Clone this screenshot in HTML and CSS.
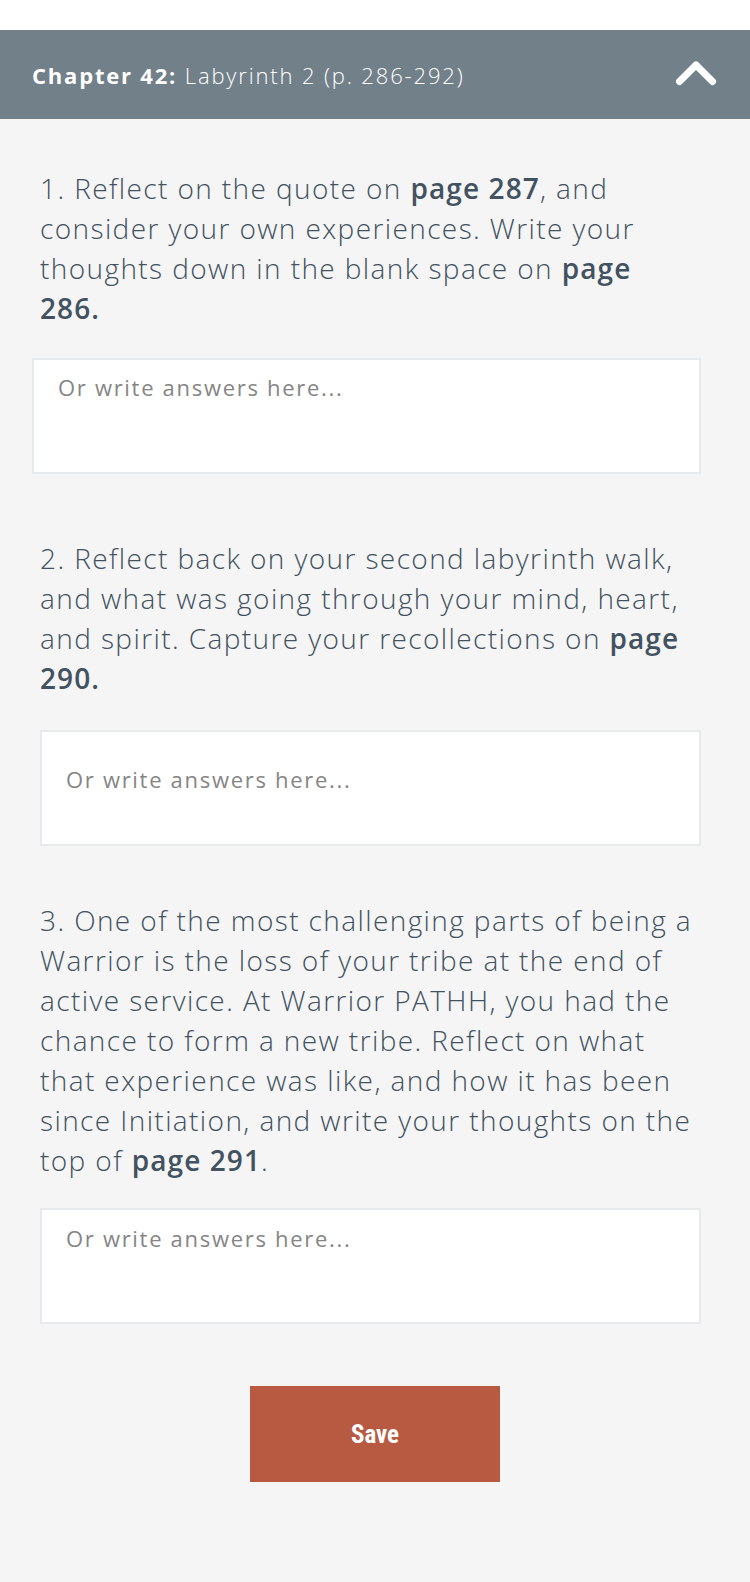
FILE: index.html
```html
<!DOCTYPE html>
<html lang="en">
<head>
<meta charset="utf-8">
<title>Chapter 42: Labyrinth 2</title>
<link rel="stylesheet" href="styles.css">
</head>
<body>
<div class="topbar"></div>
<header class="chapter-head">
  <h1 class="chapter-title"><strong>Chapter 42:</strong> Labyrinth 2 (p. 286-292)</h1>
  <button class="toggle" aria-label="Collapse">
    <svg width="42" height="26" viewBox="0 0 42 26"><path d="M4.5 21.5 L21 5 L37.5 21.5" fill="none" stroke="#fff" stroke-width="7" stroke-linecap="round" stroke-linejoin="round"/></svg>
  </button>
</header>
<main class="content">
  <section class="question q1">
    <p class="prompt">1. Reflect on the quote on <b>page 287</b>, and<br>consider your own experiences. Write your<br>thoughts down in the blank space on <b>page<br>286.</b></p>
    <textarea class="answer answer-wide" placeholder="Or write answers here..."></textarea>
  </section>
  <section class="question q2">
    <p class="prompt">2. Reflect back on your second labyrinth walk,<br>and what was going through your mind, heart,<br>and spirit. Capture your recollections on <b>page<br>290.</b></p>
    <textarea class="answer answer-low" placeholder="Or write answers here..."></textarea>
  </section>
  <section class="question q3">
    <p class="prompt">3. One of the most challenging parts of being a<br>Warrior is the loss of your tribe at the end of<br>active service. At Warrior PATHH, you had the<br>chance to form a new tribe. Reflect on what<br>that experience was like, and how it has been<br>since Initiation, and write your thoughts on the<br>top of <b>page 291</b>.</p>
    <textarea class="answer answer-mid" placeholder="Or write answers here..."></textarea>
  </section>
  <div class="actions">
    <button class="save">Save</button>
  </div>
</main>
</body>
</html>
```
FILE: styles.css
```css
* { box-sizing: border-box; }
html, body { margin: 0; padding: 0; }
body {
  background: #f5f5f5;
  font-family: "Open Sans", "Liberation Sans", sans-serif;
  color: #425260;
}
.topbar { height: 30px; background: #fff; }
.chapter-head {
  height: 89px;
  background: #72808a;
  display: flex;
  align-items: center;
  justify-content: space-between;
  padding: 0 33px 0 32px;
}
.chapter-title {
  margin: 0;
  font-size: 22px;
  font-weight: 300;
  color: #fff;
  letter-spacing: 1.85px;
  white-space: nowrap;
}
.chapter-title strong { font-weight: 700; letter-spacing: 1.8px; }
.toggle {
  border: 0;
  background: none;
  padding: 0;
  display: flex;
  margin-top: -3px;
}
.content { padding: 49px 40px 100px 40px; }
.question { display: flex; flex-direction: column; padding-right: 9px; }
.prompt {
  margin: 0;
  font-size: 28px;
  line-height: 40px;
  font-weight: 300;
  letter-spacing: 1.4px;
  white-space: nowrap;
}
.prompt b { font-weight: 600; letter-spacing: 1.1px; }
.answer {
  display: block;
  width: 100%;
  height: 116px;
  margin-top: 30px;
  border: 2px solid #e6eaed;
  background: #fff;
  resize: none;
  font-family: inherit;
  font-size: 22px;
  font-weight: 400;
  letter-spacing: 1.7px;
  padding: 12px 24px;
  color: #425260;
}
.answer::placeholder { color: #858585; }
.answer-wide { margin-left: -8px; width: calc(100% + 8px); }
.answer-low { padding-top: 32px; margin-top: 32px; }
.answer-mid { padding-top: 13px; margin-top: 28px; }
.q2 { margin-top: 64px; }
.q3 { margin-top: 54px; }
.actions { display: flex; justify-content: center; margin-top: 62px; }
.save {
  width: 250px;
  height: 96px;
  border: 0;
  background: #b85a42;
  color: #fff;
  font-family: "Roboto Condensed", "DejaVu Sans Condensed", "Liberation Sans", sans-serif;
  font-weight: 700;
  font-size: 25px;
}
```
